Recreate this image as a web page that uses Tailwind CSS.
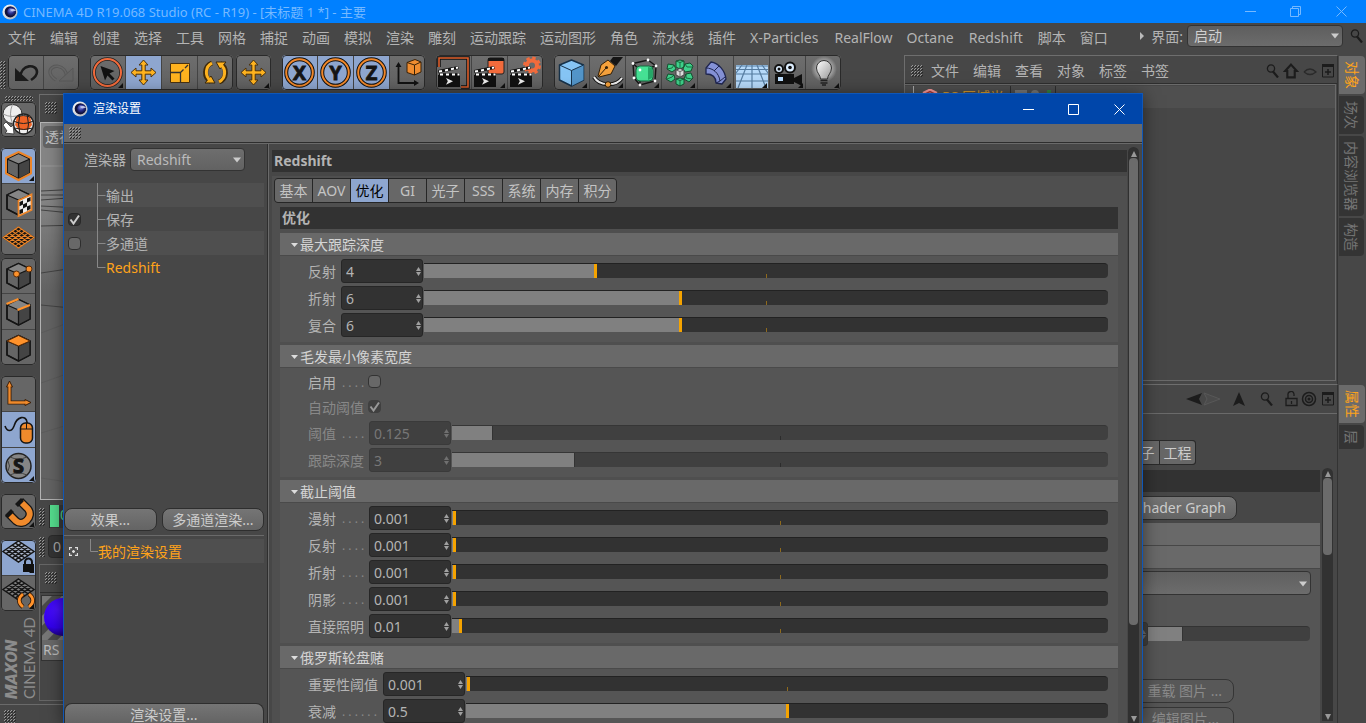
<!DOCTYPE html>
<html lang="zh-CN">
<head>
    <meta charset="UTF-8">
    <meta name="viewport" content="width=device-width, initial-scale=1.0">
    <title>CINEMA 4D R19.068 Studio</title>
    <script src="https://cdn.jsdelivr.net/npm/@tailwindcss/browser@4"></script>
</head>
<body class="relative flex h-screen flex-col overflow-hidden bg-[#474747] font-['Noto_Sans','Noto_Sans_CJK_SC',sans-serif] text-sm leading-5 text-[#b4b4b4]">

    <!-- Shared shapes -->
    <svg width="0" height="0" class="absolute" aria-hidden="true">
        <defs>
            <pattern id="dots" width="3" height="3" patternUnits="userSpaceOnUse">
                <rect x="1" y="0" width="1" height="1" fill="#999"/><rect x="0" y="1" width="1" height="1" fill="#999"/>
                <rect x="2" y="1" width="1" height="1" fill="#262626"/><rect x="1" y="2" width="1" height="1" fill="#262626"/>
            </pattern>
            <radialGradient id="ball" cx=".4" cy=".35" r=".7"><stop offset="0" stop-color="#8a94e0"/><stop offset=".5" stop-color="#2b3190"/><stop offset="1" stop-color="#0a0c30"/></radialGradient>
            <linearGradient id="ring" x1="0" y1="0" x2="1" y2="1"><stop offset="0" stop-color="#fff"/><stop offset="1" stop-color="#a9b0b8"/></linearGradient>
            <radialGradient id="mat" cx=".35" cy=".3" r=".8"><stop offset="0" stop-color="#4a10ff"/><stop offset=".6" stop-color="#3300ee"/><stop offset="1" stop-color="#12004a"/></radialGradient>
            <radialGradient id="glow"><stop offset=".4" stop-color="#fff" stop-opacity=".6"/><stop offset="1" stop-color="#fff" stop-opacity="0"/></radialGradient>
            <linearGradient id="bulb" x1="0" y1="0" x2="1" y2="1"><stop offset="0" stop-color="#fff"/><stop offset="1" stop-color="#999"/></linearGradient>
            <pattern id="stripe" width="14" height="14" patternUnits="userSpaceOnUse" patternTransform="rotate(45)"><rect width="14" height="14" fill="#4a4a4a"/><rect width="7" height="14" fill="#777"/></pattern>
        </defs>
        <symbol id="logo" viewBox="0 0 16 16">
            <circle cx="8" cy="8" r="7.6" fill="url(#ring)"/>
            <circle cx="8.3" cy="7.8" r="5.6" fill="#10123c"/>
            <circle cx="9.6" cy="7.8" r="4.4" fill="url(#ball)"/>
            <path d="M8 5.500c2-1.200 5-.6 6 1.200l-4 .8z" fill="#dfe4ff" opacity=".8"/>
        </symbol>
        <symbol id="corner" viewBox="0 0 5 5"><path d="M5 0v5H0z" fill="#111"/></symbol>
        <symbol id="move" viewBox="0 0 35 35">
            <path d="M17.500 5l4.500 5h-2.800v5.800h5.800V13l5 4.500-5 4.500v-2.800h-5.800V25H22l-4.500 5-4.500-5h2.800v-5.800H10V22l-5-4.500 5-4.500v2.800h5.800V10H13z" fill="#ffb31f" stroke="#4a3210" stroke-width="1"/>
        </symbol>
        <symbol id="axisring" viewBox="0 0 35 35">
            <circle cx="17.500" cy="17.500" r="13.300" fill="none" stroke="#111" stroke-width="4"/>
            <circle cx="17.500" cy="17.500" r="13.300" fill="none" stroke="#f0872a" stroke-width="2"/>
        </symbol>
        <symbol id="cube" viewBox="0 0 35 35">
            <path d="M17.500 5.500L29 11v14l-11.500 6L6 25V11z" fill="#656565" stroke="#151515" stroke-width="1.600" stroke-linejoin="round"/>
            <path d="M6 11l11.500 5L29 11 17.500 5.500z" fill="#858585"/>
            <path d="M17.500 16L29 11v14l-11.500 6z" fill="#444"/>
            <path d="M17.500 5.500L29 11v14l-11.500 6L6 25V11zM6 11l11.500 5L29 11M17.500 16v15" fill="none" stroke="#151515" stroke-width="1.300" stroke-linejoin="round"/>
        </symbol>
        <symbol id="clapper" viewBox="0 0 35 35">
            <path d="M2 20h22v12H2z" fill="#111"/>
            <path d="M2 15l20-4 .8 3L2.500 18z" fill="#111"/><path d="M3 18.200h21v2.600H3z" fill="#111"/>
            <path d="M3 16.600l3-.6M9 15.400l3-.6M15 14.200l3-.6M20 13l2-.4M4 19.500h3M10 19.500h3M16 19.500h3M21.500 19.500h2" stroke="#fff" stroke-width="2"/>
            <path d="M10 23l7 3.300-7 3.400 1.800-3.400z" fill="#eee"/>
        </symbol>
        <symbol id="mesh" viewBox="0 0 35 35">
            <path d="M17.500 3L33 13.500 17.500 24 2 13.500z" fill="currentColor"/>
            <path d="M14.400 5.100l15.500 10.500M11.300 7.200l15.500 10.500M8.200 9.300l15.500 10.500M5.100 11.400l15.500 10.500M20.600 5.100L5.100 15.600M23.700 7.200L8.200 17.700M26.800 9.300L11.300 19.800M29.900 11.400L14.400 21.900M17.500 3L33 13.500 17.500 24 2 13.500z" fill="none" stroke="#151515" stroke-width="1.500"/>
        </symbol>
        <symbol id="lens" viewBox="0 0 14 14"><circle cx="5" cy="4.500" r="3.600" fill="none" stroke="#1c1c1c" stroke-width="1.300"/><path d="M7 7.500l5 6" stroke="#1c1c1c" stroke-width="2.200"/></symbol>
        <symbol id="plus" viewBox="0 0 14 14"><path d="M1.500 1h11v12h-11z" fill="none" stroke="#1c1c1c"/><path d="M1 0h12v3H1z" fill="#1c1c1c"/><path d="M7 5v6M4 8h6" stroke="#1c1c1c" stroke-width="1.500"/></symbol>
    </svg>

    <!-- Title bar -->
    <header class="flex h-[23px] shrink-0 items-center bg-[#0080ff] pr-0.5 pl-0.5 text-[#76b9ff]">
        <svg class="size-4"><use href="#logo"/></svg>
        <h1 class="ml-[5px] flex-1 text-[13px]">CINEMA 4D R19.068 Studio (RC - R19) - [未标题 1 *] - 主要</h1>
        <button aria-label="最小化" class="flex w-[46px] justify-center"><svg width="11" height="11" fill="none" stroke="currentColor"><path d="M0 5.500h11"/></svg></button>
        <button aria-label="还原" class="flex w-[45px] justify-center"><svg width="11" height="11" fill="none" stroke="currentColor"><path d="M.5 2.500h8v8h-8zM2.500 2.500v-2h8v8h-2"/></svg></button>
        <button aria-label="关闭" class="flex w-[46px] justify-center"><svg width="11" height="11" fill="none" stroke="currentColor"><path d="M.5 .5l10 10M10.500 .5l-10 10"/></svg></button>
    </header>

    <!-- Menu bar -->
    <nav class="flex h-8 shrink-0 items-start gap-3.5 pl-2 pt-[5px] whitespace-nowrap">
        <button>文件</button><button>编辑</button><button>创建</button><button>选择</button><button>工具</button><button>网格</button><button>捕捉</button><button>动画</button><button>模拟</button><button>渲染</button><button>雕刻</button><button>运动跟踪</button><button>运动图形</button><button>角色</button><button>流水线</button><button>插件</button><button>X-Particles</button><button class="pl-0.5">RealFlow</button><button>Octane</button><button class="px-px">Redshift</button><button>脚本</button><button>窗口</button>
        <div class="-mt-[3px] ml-auto flex items-center">
            <svg class="mr-1.5 h-2 w-1.5" viewBox="0 0 6 8"><path d="M1 0l4 4-4 4z" fill="#bbb"/></svg>
            <label for="layout" class="pt-0.5">界面:</label>
            <div class="relative ml-1">
                <select id="layout" class="h-[22px] w-[156px] appearance-none rounded border border-[#333] bg-linear-to-b from-[#5e5e5e] to-[#6c6c6c] pl-1.5 leading-5 text-[#d0d0d0]"><option>启动</option></select>
                <svg class="pointer-events-none absolute top-2 right-1 h-1.5 w-2" viewBox="0 0 8 5"><path d="M0 0h8L4 5z" fill="#ccc"/></svg>
            </div>
            <svg class="mr-0.5 ml-[7px] size-3.5"><use href="#lens"/></svg>
        </div>
    </nav>

    <div class="flex min-h-0 flex-1">
        <!-- Left side: tools and viewport -->
        <div class="flex min-w-0 flex-1 flex-col">
            <div class="flex h-[39px] shrink-0 items-start">
                <svg class="mt-1.5 mr-[2px] h-7 w-1.5"><rect width="6" height="28" fill="url(#dots)"/></svg>
                <div class="relative mr-[11px] flex gap-px overflow-hidden rounded bg-[#444] after:pointer-events-none after:absolute after:inset-0 after:rounded after:border after:border-[#2a2a2a]">
                    <button aria-label="撤销" class="size-[35px] bg-linear-to-b from-[#6e6e6e] to-[#606060]"><svg viewBox="0 0 35 35"><path d="M12 23C13 8 29 9 29 17c0 4-3 6-6 8" fill="none" stroke="#1b1b1b" stroke-width="2.600"/><path d="M7 13v13h14z" fill="#1b1b1b"/></svg></button>
                    <button aria-label="重做" class="size-[35px] bg-linear-to-b from-[#6e6e6e] to-[#606060]"><svg viewBox="0 0 35 35"><path d="M23 23C22 8 6 9 6 17c0 4 3 6 6 8" fill="none" stroke="#585858" stroke-width="3.500"/><path d="M23 23C22 8 6 9 6 17c0 4 3 6 6 8" fill="none" stroke="#666" stroke-width="1.600"/><path d="M29 13v13H15z" fill="#646464" stroke="#585858"/></svg></button>
                </div>
                <div class="relative mr-[3px] flex gap-px overflow-hidden rounded bg-[#444] after:pointer-events-none after:absolute after:inset-0 after:rounded after:border after:border-[#2a2a2a]">
                    <button aria-label="选择" class="relative size-[35px] bg-linear-to-b from-[#6e6e6e] to-[#606060]"><svg viewBox="0 0 35 35"><circle cx="17.500" cy="17.500" r="13.500" fill="none" stroke="#222" stroke-width="3.500"/><circle cx="17.500" cy="17.500" r="13.500" fill="none" stroke="#f26b3c" stroke-width="2"/><path d="M10.500 11l14 5-5 2.500 5 5-2 2-5-5-2.500 5z" fill="#111"/></svg><svg class="absolute right-0.5 bottom-0.5 size-[5px]"><use href="#corner"/></svg></button>
                    <button aria-label="移动" class="size-[35px] bg-[#8ea6cf]"><svg viewBox="0 0 35 35"><use href="#move"/></svg></button>
                    <button aria-label="缩放" class="size-[35px] bg-linear-to-b from-[#6e6e6e] to-[#606060]"><svg viewBox="0 0 35 35"><path d="M8.500 8.500h19v19h-19z" fill="#ffb31f" stroke="#4a3210"/><path d="M8.500 17.500h10v10M18.500 17.500l3-3m1.500-1.500l3-3" fill="none" stroke="#333" stroke-width="1.300"/></svg></button>
                    <button aria-label="旋转" class="size-[35px] bg-linear-to-b from-[#6e6e6e] to-[#606060]"><svg viewBox="0 0 35 35"><g fill="none" stroke="#3d2a0c" stroke-width="5"><path d="M13 26.500A10.200 10.200 0 0 1 14 8M22 8.500A10.200 10.200 0 0 1 21 27"/></g><path d="M7 28h10l-4-7zM28 7H18l4 7z" fill="#ffb31f" stroke="#3d2a0c"/><g fill="none" stroke="#ffb31f" stroke-width="3"><path d="M12.500 25.500A10.200 10.200 0 0 1 14 8.200M22.500 9.500A10.200 10.200 0 0 1 21 26.800"/></g></svg></button>
                </div>
                <div class="relative mr-[11px] flex overflow-hidden rounded after:pointer-events-none after:absolute after:inset-0 after:rounded after:border after:border-[#2a2a2a]">
                    <button aria-label="最近工具" class="relative size-[35px] bg-linear-to-b from-[#6e6e6e] to-[#606060]"><svg viewBox="0 0 35 35"><use href="#move"/></svg><svg class="absolute right-0.5 bottom-0.5 size-[5px]"><use href="#corner"/></svg></button>
                </div>
                <div class="relative mr-[11px] flex gap-px overflow-hidden rounded bg-[#444] after:pointer-events-none after:absolute after:inset-0 after:rounded after:border after:border-[#2a2a2a]">
                    <button aria-label="X 轴" class="size-[35px] bg-[#8ea6cf]"><svg viewBox="0 0 35 35" class="text-xl font-bold"><use href="#axisring"/><text x="17.500" y="24.500" text-anchor="middle" fill="#151515" stroke="#151515" stroke-width=".8">X</text></svg></button>
                    <button aria-label="Y 轴" class="size-[35px] bg-[#8ea6cf]"><svg viewBox="0 0 35 35" class="text-xl font-bold"><use href="#axisring"/><text x="17.500" y="24.500" text-anchor="middle" fill="#151515" stroke="#151515" stroke-width=".8">Y</text></svg></button>
                    <button aria-label="Z 轴" class="size-[35px] bg-[#8ea6cf]"><svg viewBox="0 0 35 35" class="text-xl font-bold"><use href="#axisring"/><text x="17.500" y="24.500" text-anchor="middle" fill="#151515" stroke="#151515" stroke-width=".8">Z</text></svg></button>
                    <button aria-label="坐标系统" class="size-[35px] bg-linear-to-b from-[#6e6e6e] to-[#606060]"><svg viewBox="0 0 35 35"><path d="M8.500 11v17H25" fill="none" stroke="#111" stroke-width="1.800"/><path d="M5.500 12h6l-3-5zM24 25v6l5-3z" fill="#111"/><path d="M17 7.500l8-3 6 2.500v10l-6.500 3-7.500-2.500z" fill="#f08d30" stroke="#3a2208"/><path d="M17 7.500l7.500 2.500 6.500-3M24.500 10v10" fill="none" stroke="#3a2208"/></svg></button>
                </div>
                <div class="relative mr-[11px] flex gap-px overflow-hidden rounded bg-[#444] after:pointer-events-none after:absolute after:inset-0 after:rounded after:border after:border-[#2a2a2a]">
                    <button aria-label="渲染活动视图" class="size-[35px] bg-linear-to-b from-[#6e6e6e] to-[#606060]"><svg viewBox="0 0 35 35"><path d="M3 12V3h29v29h-7" fill="none" stroke="#111" stroke-width="3.500"/><path d="M3 12V3h29v29h-7" fill="none" stroke="#e0602c" stroke-width="1.600"/><use href="#clapper"/></svg></button>
                    <button aria-label="渲染到图片查看器" class="relative size-[35px] bg-linear-to-b from-[#6e6e6e] to-[#606060]"><svg viewBox="0 0 35 35"><rect x="16" y="3" width="16" height="16" rx="2" fill="#f26b3c" stroke="#222"/><path d="M16 3h16v3H16z" fill="#151515"/><use href="#clapper"/></svg><svg class="absolute right-0.5 bottom-0.5 size-[5px]"><use href="#corner"/></svg></button>
                    <button aria-label="编辑渲染设置" class="size-[35px] bg-linear-to-b from-[#6e6e6e] to-[#606060]"><svg viewBox="0 0 35 35"><circle cx="24" cy="10.500" r="5" fill="none" stroke="#f26b3c" stroke-width="4"/><circle cx="24" cy="10.500" r="7.600" fill="none" stroke="#f26b3c" stroke-width="2.800" stroke-dasharray="3.400 2.570"/><use href="#clapper"/></svg></button>
                </div>
                <div class="relative flex gap-px overflow-hidden rounded bg-[#444] after:pointer-events-none after:absolute after:inset-0 after:rounded after:border after:border-[#2a2a2a]">
                    <button aria-label="立方体" class="relative size-[35px] bg-linear-to-b from-[#6e6e6e] to-[#606060]"><svg viewBox="0 0 35 35"><path d="M17.500 5l12 5v15l-12 6-12-6V10z" fill="#86c5f5" stroke="#17324a" stroke-width="1.500" stroke-linejoin="round"/><path d="M17.500 15.500l12-5.500v15l-12 6z" fill="#5395c9"/><path d="M5.500 10l12 5.500 12-5.500M17.500 15.500V31" fill="none" stroke="#17324a"/></svg><svg class="absolute right-0.5 bottom-0.5 size-[5px]"><use href="#corner"/></svg></button>
                    <button aria-label="画笔" class="relative size-[35px] bg-linear-to-b from-[#6e6e6e] to-[#606060]"><svg viewBox="0 0 35 35"><path d="M23 2h10l-7 9-6-5z" fill="#151515"/><path d="M18 5l7 6-4 8-12 3-1-1 3-11z" fill="#f5a13c" stroke="#332008"/><path d="M9 21l7-8" stroke="#332008"/><circle cx="16.500" cy="12.500" r="1.500" fill="#332008"/><path d="M4 22c5 9 22 10 28 1" fill="none" stroke="#151515" stroke-width="4"/><path d="M4 22c5 9 22 10 28 1" fill="none" stroke="#eee" stroke-width="2"/><circle cx="18" cy="29.500" r="2.800" fill="#f5a13c" stroke="#332008"/></svg><svg class="absolute right-0.5 bottom-0.5 size-[5px]"><use href="#corner"/></svg></button>
                    <button aria-label="细分曲面" class="relative size-[35px] bg-linear-to-b from-[#6e6e6e] to-[#606060]"><svg viewBox="0 0 35 35"><path d="M7 8.500L22 5l8 6-1 15-15 4-6-7zM7 8.500l7 6.500 16-4M14 15v15" fill="none" stroke="#151515" stroke-width="1.400"/><rect x="10" y="11" width="17" height="15" rx="4" fill="#46e295" stroke="#16683f"/><path d="M22 12l4 1v10l-4 2z" fill="#25a868"/><g fill="#fff"><circle cx="7" cy="8.500" r="1.400"/><circle cx="22" cy="5" r="1.400"/><circle cx="30" cy="11" r="1.400"/><circle cx="29" cy="26" r="1.400"/><circle cx="14" cy="30" r="1.400"/><circle cx="8" cy="23" r="1.400"/><circle cx="14" cy="15" r="1.400"/></g></svg><svg class="absolute right-0.5 bottom-0.5 size-[5px]"><use href="#corner"/></svg></button>
                    <button aria-label="阵列" class="relative size-[35px] bg-linear-to-b from-[#6e6e6e] to-[#606060]"><svg viewBox="0 0 35 35"><g fill="#3ed08a" stroke="#14502f"><path d="M14 6l4-1 4 1v6l-4 2-4-2zM23 9l5-1 3 3-2 5-6 1-2-3zM24 19l5-1 2 5-4 4-5-3zM14 24l4-1 4 1v5l-4 2-4-2zM6 19l6 1 1 4-4 3-5-3zM6 9l6 1 2 4-4 3-5-3z"/></g><path d="M14 6l4 1.500 4-1.500M18 7.500V14M14 24l4 1.500 4-1.500M18 25.500V31M5 14l5-1 2-3M5 24l5-2 2-2M23 9l2 3 5 0M24 19l0 4 6 1" fill="none" stroke="#14502f" stroke-width=".8"/><path d="M14 15l4-1.500 4 1.500v5l-4 2-4-2z" fill="#ddd" stroke="#444"/><path d="M14 15l4 1.500 4-1.500M18 16.500V22" fill="none" stroke="#666"/></svg><svg class="absolute right-0.5 bottom-0.5 size-[5px]"><use href="#corner"/></svg></button>
                    <button aria-label="弯曲" class="relative size-[35px] bg-linear-to-b from-[#6e6e6e] to-[#606060]"><svg viewBox="0 0 35 35"><path d="M8 13l5-6c8 1 14 9 15 17l-4 5-6-1c0-6-4-9-10-9z" fill="#8491d6" stroke="#20264f" stroke-width="1.300" stroke-linejoin="round"/><path d="M8 13c7 0 13 5 14 13l-4 2M22 26l5-4M16 16l5-5" fill="none" stroke="#20264f"/></svg><svg class="absolute right-0.5 bottom-0.5 size-[5px]"><use href="#corner"/></svg></button>
                    <button aria-label="地面" class="relative size-[35px] bg-linear-to-b from-[#6e6e6e] to-[#606060]"><svg viewBox="0 0 35 35"><path d="M2 10h32v23H2z" fill="#b7dafa"/><path d="M2 11h32M2 14.500h32M2 19h32M2 26h32M18 10v23M13 10L4 33M23 10l9 23M8 10l-6 8M28 10l6 8" fill="none" stroke="#567ca0" stroke-width="1.200"/></svg><svg class="absolute right-0.5 bottom-0.5 size-[5px]"><use href="#corner"/></svg></button>
                    <button aria-label="摄像机" class="relative size-[35px] bg-linear-to-b from-[#6e6e6e] to-[#606060]"><svg viewBox="0 0 35 35"><path d="M5 19h19v4l8-4v12l-8-4v2H5z" fill="#111"/><circle cx="9" cy="14" r="4" fill="#ddeeff" stroke="#111" stroke-width="2"/><circle cx="20" cy="12.500" r="5" fill="#ddeeff" stroke="#111" stroke-width="2"/><circle cx="9" cy="14" r="1.500" fill="#111"/><circle cx="20" cy="12.500" r="1.800" fill="#111"/><path d="M8 22h5v4H8z" fill="#bfe0ff"/></svg><svg class="absolute right-0.5 bottom-0.5 size-[5px]"><use href="#corner"/></svg></button>
                    <button aria-label="灯光" class="relative size-[35px] bg-linear-to-b from-[#6e6e6e] to-[#606060]"><svg viewBox="0 0 35 35"><circle cx="18" cy="14" r="13" fill="url(#glow)"/><path d="M14.500 24c0-4-4-6-4-11a7.500 7.500 0 0 1 15 0c0 5-4 7-4 11z" fill="url(#bulb)" stroke="#333"/><path d="M14.500 25.500h7M14.500 28h7M16 30h4" stroke="#222" stroke-width="1.600"/></svg><svg class="absolute right-0.5 bottom-0.5 size-[5px]"><use href="#corner"/></svg></button>
                </div>
            </div>

            <div class="flex min-h-0 flex-1">
                <!-- Mode palette -->
                <div class="flex w-[39px] shrink-0 flex-col items-start pl-px">
                    <svg class="mt-[2px] mb-px ml-1 h-[5px] w-7 shrink-0"><rect width="28" height="5" fill="url(#dots)"/></svg>
                    <div class="relative mb-[11px] flex shrink-0 flex-col overflow-hidden rounded after:pointer-events-none after:absolute after:inset-0 after:rounded after:border after:border-[#2a2a2a]">
                        <button aria-label="转为可编辑对象" class="size-[35px] bg-[#686868]"><svg viewBox="0 0 35 35"><circle cx="11.500" cy="12" r="9.500" fill="#eee" stroke="#333"/><path d="M2 12q9.500 5 19 0M11.500 2.500q-4 9 0 19" fill="none" stroke="#999"/><circle cx="22.500" cy="22" r="10" fill="#eee" stroke="#222" stroke-width="1.400"/><path d="M16 14h13l2 9-4 5h-9l-4-5z" fill="#ee6326"/><path d="M12.500 19q10 5 20 0M13 26q10 3 19 0M19 12q-3 10 0 20M26 12q3 10 0 20M14 16q8-5 17 0" fill="none" stroke="#222"/><path d="M2 23l3-3 5 5 2-2 1 9-9-1 2-2z" fill="#fff" stroke="#333" stroke-width=".8"/></svg></button>
                    </div>
                    <div class="relative mb-[3px] flex shrink-0 flex-col gap-px overflow-hidden rounded bg-[#444] after:pointer-events-none after:absolute after:inset-0 after:rounded after:border after:border-[#2a2a2a]">
                        <button aria-label="模型" class="relative size-[35px] bg-[#8ea6cf]"><svg viewBox="0 0 35 35"><use href="#cube"/><path d="M17.500 4L30 10v15.500l-12.500 6.500L5 25.500V10z" fill="none" stroke="#ed8528" stroke-width="2"/></svg><svg class="absolute right-0.5 bottom-0.5 size-[5px]"><use href="#corner"/></svg></button>
                        <button aria-label="纹理" class="size-[35px] bg-[#666]"><svg viewBox="0 0 35 35"><use href="#cube"/><path d="M17.500 16.500l13-6v15.500l-13 6z" fill="#eee" stroke="#ed8528" stroke-width="1.800"/><path d="M18.500 18l3.500-1.600v4.200l-3.500 1.600zM26 14.500l3.500-1.500v4L26 18.600zM22 20.600l4-2v4l-4 2zM18.500 26l3.500-1.500v4.200l-3.500 1.600zM26 22.600l3.500-1.600v4L26 26.700z" fill="#111"/></svg></button>
                        <button aria-label="工作平面" class="size-[35px] bg-[#666] text-[#ed8528]"><svg viewBox="0 0 35 35"><g transform="translate(0 4)"><path d="M17.500 2.500L34 13.500 17.500 24.500 1 13.500z" fill="#151515"/><path d="M14.400 5.100l15.500 10.500M11.300 7.200l15.500 10.500M8.200 9.300l15.500 10.500M5.100 11.400l15.500 10.500M20.600 5.100L5.100 15.600M23.700 7.200L8.200 17.700M26.800 9.300L11.300 19.800M29.900 11.400L14.400 21.900M17.500 3L33 13.500 17.500 24 2 13.500z" fill="none" stroke="currentColor" stroke-width="1.100"/></g></svg></button>
                    </div>
                    <div class="relative mb-[11px] flex shrink-0 flex-col gap-px overflow-hidden rounded bg-[#444] after:pointer-events-none after:absolute after:inset-0 after:rounded after:border after:border-[#2a2a2a]">
                        <button aria-label="点" class="size-[35px] bg-[#666]"><svg viewBox="0 0 35 35"><use href="#cube"/><g fill="#ff922b" stroke="#5a2c08"><circle cx="15.500" cy="16" r="3"/><circle cx="28" cy="11" r="3"/></g></svg></button>
                        <button aria-label="边" class="size-[35px] bg-[#666]"><svg viewBox="0 0 35 35"><use href="#cube"/><path d="M5.500 10l12-5M16.500 16l12.500-5" stroke="#ff922b" stroke-width="2.200"/></svg></button>
                        <button aria-label="多边形" class="size-[35px] bg-[#666]"><svg viewBox="0 0 35 35"><use href="#cube"/><path d="M6 11l11.500-5.500L29 11l-11.500 5z" fill="#ff922b" stroke="#5a2c08"/></svg></button>
                    </div>
                    <div class="relative mb-[11px] flex shrink-0 flex-col gap-px overflow-hidden rounded bg-[#444] after:pointer-events-none after:absolute after:inset-0 after:rounded after:border after:border-[#2a2a2a]">
                        <button aria-label="启用轴心" class="size-[35px] bg-[#666]"><svg viewBox="0 0 35 35"><path d="M8.500 10v16.500H25" fill="none" stroke="#3a1c05" stroke-width="4"/><path d="M5.500 11l3-6 3 6zM24 23.500l6 3-6 3z" fill="#f08a2c" stroke="#3a1c05"/><path d="M8.500 9v17.500H26" fill="none" stroke="#f08a2c" stroke-width="2.300"/></svg></button>
                        <button aria-label="微调" class="size-[35px] bg-[#8ea6cf]"><svg viewBox="0 0 35 35"><path d="M4 14c2 6 7 6 9 0 3-10 12-11 13-4v2" fill="none" stroke="#151515" stroke-width="1.600"/><rect x="19.500" y="11" width="12" height="20" rx="5" fill="#f08a2c" stroke="#151515" stroke-width="1.500"/><path d="M19.500 17h12M25.500 11v6" stroke="#151515"/></svg></button>
                        <button aria-label="捕捉" class="relative size-[35px] bg-[#8ea6cf]"><svg viewBox="0 0 35 35" class="text-xl font-bold"><circle cx="17.500" cy="18" r="12.500" fill="#858585" stroke="#222" stroke-width="1.500"/><path d="M9 9q8 4 17 0M9 27q8-4 17 0M7 13q3 5 0 10" fill="none" stroke="#444"/><text x="17.500" y="25" text-anchor="middle" fill="#151515" stroke="#151515">S</text></svg><svg class="absolute right-0.5 bottom-0.5 size-[5px]"><use href="#corner"/></svg></button>
                    </div>
                    <div class="relative mb-[11px] flex shrink-0 flex-col overflow-hidden rounded after:pointer-events-none after:absolute after:inset-0 after:rounded after:border after:border-[#2a2a2a]">
                        <button aria-label="磁铁" class="relative size-[35px] bg-[#666]"><svg viewBox="0 0 35 35"><path d="M7 19l8 8c7 6 18-4 12-12l-8-8" fill="none" stroke="#151515" stroke-width="8.500"/><path d="M8 20l7 7c7 6 18-4 12-12l-7-7" fill="none" stroke="#f08a2c" stroke-width="6"/><path d="M4 21l6-6 3 3-6 6zM14 10l6-6 3 3-6 6z" fill="#151515"/></svg><svg class="absolute right-0.5 bottom-0.5 size-[5px]"><use href="#corner"/></svg></button>
                    </div>
                    <div class="relative flex shrink-0 flex-col gap-px overflow-hidden rounded bg-[#444] after:pointer-events-none after:absolute after:inset-0 after:rounded after:border after:border-[#2a2a2a]">
                        <button aria-label="锁定工作平面" class="relative size-[35px] bg-[#8ea6cf]"><svg viewBox="0 0 35 35" class="text-[#a9b4c8]"><g transform="translate(0 -2)"><use href="#mesh"/></g><path d="M24 25v-3a3.500 3.500 0 0 1 7 0v3" fill="none" stroke="#111" stroke-width="2"/><path d="M22 24h11v8H22z" fill="#111"/></svg><svg class="absolute right-0.5 bottom-0.5 size-[5px]"><use href="#corner"/></svg></button>
                        <button aria-label="平直工作平面" class="relative size-[35px] bg-[#666]"><svg viewBox="0 0 35 35" class="text-[#808080]"><use href="#mesh"/><path d="M22 18c-5 4-5 9 0 13M28 18c5 4 5 9 0 13" fill="none" stroke="#3a1c05" stroke-width="4.500"/><path d="M22 18c-5 4-5 9 0 13M28 18c5 4 5 9 0 13" fill="none" stroke="#ff922b" stroke-width="2.800"/></svg><svg class="absolute right-0.5 bottom-0.5 size-[5px]"><use href="#corner"/></svg></button>
                    </div>
                    <div class="mt-1 flex h-[84px] shrink-0 rotate-180 flex-row-reverse whitespace-nowrap text-[#8c8c8c]">
                        <span class="font-[Roboto] text-[17px] leading-5 font-black italic [writing-mode:vertical-rl]">MAXON</span>
                        <span class="font-[Lato] text-[15px] leading-4 [writing-mode:vertical-rl]">CINEMA 4D</span>
                    </div>
                    <div class="mt-[5px] -ml-px w-[63px] border-t border-[#6a6a6a] pt-[5px] pl-1"><svg class="h-[15px] w-3"><rect width="12" height="15" fill="url(#dots)"/></svg></div>
                </div>

                <!-- Viewport, timeline and materials -->
                <div class="flex min-w-0 flex-1 flex-col">
                    <div class="h-7 shrink-0 border-t border-l border-[#6e6e6e] pt-[7px] pl-[5px]"><svg class="size-3"><rect width="12" height="12" fill="url(#dots)"/></svg></div>
                    <div class="relative ml-px h-[378px] shrink-0 border border-[#b4b4b4] bg-linear-to-b from-[#858585] from-20% to-[#636363] to-45%">
                        <svg class="absolute inset-0 h-full w-full" fill="none" stroke="#444"><path d="M0 43h900" stroke="#999"/><path d="M0 68l40-2M0 72h40M0 77l40-3M0 83l40 2M0 87l40 4M0 103l40-1M0 150l40-6M0 182l40 4"/><path d="M0 210l40-15M0 260l40-14M0 310l40-12M0 355l40 6" stroke="#5c5c5c"/></svg>
                        <span class="relative mt-[3px] ml-[2px] inline-block h-[22px] w-20 rounded-sm bg-[#636363] pl-[2px] leading-[22px] text-[#c8c8c8]">透视视图</span>
                    </div>
                    <div class="mt-[5px] flex h-[23px] shrink-0 items-center gap-[4px]">
                        <svg class="h-[18px] w-1.5"><rect width="6" height="18" fill="url(#dots)"/></svg>
                        <div class="flex h-full flex-1 items-start border-l border-[#2b2b2b] bg-[#3a3a3a] text-[#4fd98a]"><span class="mr-px h-[22px] w-[9px] bg-[#55dd8e]"></span>0</div>
                    </div>
                    <div class="mt-[7px] flex h-[23px] shrink-0 items-center gap-[3px]">
                        <svg class="h-5 w-1.5"><rect width="6" height="20" fill="url(#dots)"/></svg>
                        <input aria-label="起始帧" value="0" class="h-full w-20 rounded border border-[#2b2b2b] bg-[#343434] pl-[4px] text-[#aaa]">
                    </div>
                    <div class="mt-[6px] h-[137px] shrink-0 border border-[#666]">
                        <div class="h-7 border-b border-[#2f2f2f] pt-[7px] pl-[5px]"><svg class="size-3"><rect width="12" height="12" fill="url(#dots)"/></svg></div>
                        <figure class="mt-0.5 ml-px w-[60px] border border-[#333] bg-[#696969]">
                            <svg class="h-11 w-full"><rect width="60" height="44" fill="url(#stripe)"/><circle cx="21" cy="21" r="19" fill="url(#mat)"/></svg>
                            <figcaption class="pl-px text-[#bbb]">RS Mat</figcaption>
                        </figure>
                    </div>
                </div>
            </div>
        </div>

        <!-- Right side: managers -->
        <div class="flex w-[462px] shrink-0 flex-col">
            <div class="flex h-[329px] shrink-0">
                <section class="flex w-[434px] flex-col border-t border-r border-l border-t-[#6e6e6e] border-r-[#333] border-l-[#6e6e6e] pr-px pb-[3px]">
                    <div class="-mr-px flex h-7 shrink-0 items-center gap-3.5 border-b border-[#2e2e2e] pt-0.5 pl-1.5">
                        <svg class="-mr-[6px] size-3"><rect width="12" height="12" fill="url(#dots)"/></svg>
                        <button>文件</button><button>编辑</button><button>查看</button><button>对象</button><button>标签</button><button>书签</button>
                        <div class="mr-[2px] ml-auto flex items-center gap-[3px]">
                            <svg class="size-3.5"><use href="#lens"/></svg>
                            <svg class="size-4" viewBox="0 0 15 15"><path d="M7.500 1.500l5.500 6h-2v6H4v-6H2z" fill="none" stroke="#1c1c1c" stroke-width="2"/></svg>
                            <svg class="h-3.5 w-4" viewBox="0 0 16 14"><path d="M2 8q6-6 12 0q-6 5-12 0" fill="none" stroke="#2a2a2a" stroke-width="1.300"/></svg>
                            <svg class="size-3.5"><use href="#plus"/></svg>
                        </div>
                    </div>
                    <div class="flex-1 border-t border-r border-b border-[#6a6a6a]">
                        <div class="mt-px flex h-[22px] items-center bg-[#4f4f4f]">
                            <span class="ml-2 h-full w-px bg-[#aaa]"></span>
                            <svg class="ml-2 size-4" viewBox="0 0 16 16"><path d="M8 0l7 4v8l-7 4-7-4V4z" fill="#a83a3a"/><path d="M1 4l7-3.500L15 4" fill="none" stroke="#ff9c9c" stroke-width="2"/><circle cx="8" cy="7" r="3" fill="none" stroke="#f6a0a0"/></svg>
                            <span class="ml-1 text-[#d69a2c]">RS 区域光</span>
                            <span class="ml-1.5 flex h-full items-start gap-1 border-x border-[#2e2e2e] px-1 pt-1"><i class="h-2.5 w-3 bg-[#777]"></i><i class="size-2 rounded-full bg-[#777]"></i><i class="ml-1 size-1 bg-[#358040]"></i></span>
                        </div>
                    </div>
                </section>
                <div class="flex flex-1 flex-col items-start gap-[2px] pt-px pl-px text-sm">
                    <button class="w-[26px] rounded-r bg-[#6b6b6b] pt-[5px] pb-[5px] leading-[26px] text-[#ffa31a] [text-orientation:sideways] [writing-mode:vertical-rl]">对象</button>
                    <button class="w-[25px] rounded-r bg-[#343434] pt-[5px] pb-[5px] leading-[25px] text-[#747474] [text-orientation:sideways] [writing-mode:vertical-rl]">场次</button>
                    <button class="w-[25px] rounded-r bg-[#343434] pt-[5px] pb-[5px] leading-[25px] text-[#747474] [text-orientation:sideways] [writing-mode:vertical-rl]">内容浏览器</button>
                    <button class="w-[25px] rounded-r bg-[#343434] pt-[5px] pb-[5px] leading-[25px] text-[#747474] [text-orientation:sideways] [writing-mode:vertical-rl]">构造</button>
                </div>
            </div>
            <div class="flex min-h-0 flex-1">
                <section class="flex w-[434px] flex-col border-t border-r border-t-[#6e6e6e] border-r-[#333]">
                    <div class="flex h-[29px] shrink-0 items-center justify-end border-b border-[#6a6a6a] pr-[2px]">
                        <svg class="mr-2.5 h-4 w-9" viewBox="0 0 36 16"><path d="M0 8l16-6-3 6 3 6z" fill="#1c1c1c"/><path d="M34 8L18 2l3 6-3 6z" fill="#4b4b4b" stroke="#585858"/></svg>
                        <svg class="mr-3.5 h-4 w-3.5" viewBox="0 0 14 16"><path d="M7 1l6 14-6-3-6 3z" fill="#1c1c1c"/></svg>
                        <svg class="mr-[9px] size-3.5"><use href="#lens"/></svg>
                        <svg class="mr-0.5 size-4" viewBox="0 0 16 16" fill="none" stroke="#1c1c1c" stroke-width="1.300"><path d="M3 7.500h11v7H3zM5 7V4a3 3 0 0 1 6-1v2M8.500 10v3"/></svg>
                        <svg class="mr-1 size-4" viewBox="0 0 16 16" fill="none" stroke="#1c1c1c" stroke-width="1.500"><circle cx="8" cy="8" r="6.500"/><circle cx="8" cy="8" r="3.500"/><circle cx="8" cy="8" r=".8"/></svg>
                        <svg class="size-3.5"><use href="#plus"/></svg>
                    </div>
                    <div class="flex min-h-0 flex-1">
                        <div class="flex min-w-0 flex-1 flex-col items-end">
                            <div class="mt-[26px] mr-[124px] flex shrink-0 gap-px rounded-[3px] border border-[#2a2a2a] bg-[#2a2a2a] text-[#ccc]">
                                <button class="h-[23px] w-[37px] bg-[#676767]">光子</button><button class="h-[23px] w-[35px] rounded-r-[3px] bg-[#676767]">工程</button>
                            </div>
                            <div class="mt-[5px] h-[22px] w-full shrink-0 bg-[#323232]"></div>
                            <button class="mt-1 mr-[83px] h-[24px] shrink-0 rounded-lg border border-[#2e2e2e] bg-linear-to-b from-[#757575] to-[#646464] px-2.5 leading-[22px] text-[#ccc]">Shader Graph</button>
                            <div class="mt-[3px] h-[22px] w-full shrink-0 bg-[#696969]"></div>
                            <div class="mt-px h-[22px] w-full shrink-0 bg-[#696969]"></div>
                            <div class="mt-px flex w-full flex-1 flex-col items-end bg-[#555] pt-[2px]">
                                <div class="relative mr-[9px]">
                                    <select aria-label="纹理" class="block h-6 w-72 appearance-none rounded border border-[#333] bg-linear-to-b from-[#606060] to-[#6c6c6c]"><option></option></select>
                                    <svg class="pointer-events-none absolute top-2.5 right-1 h-1.5 w-2" viewBox="0 0 8 5"><path d="M0 0h8L4 5z" fill="#ccc"/></svg>
                                </div>
                                <div class="mt-[27px] mr-[10px] flex">
                                    <div class="relative">
                                        <input type="text" aria-label="偏移值" disabled class="block h-6 w-20 rounded-[3px] border border-[#3a3a3a] bg-[#404040]">
                                        <svg class="pointer-events-none absolute top-2 right-0.5 h-[9px] w-[5px]" viewBox="0 0 5 9"><path d="M2.500 0L5 4H0zM2.500 9L5 5H0z" fill="#707070"/></svg>
                                    </div>
                                    <input type="range" aria-label="偏移" disabled min="0" max="1" step="any" value="0.21" class="mt-1 h-[15px] w-[162px] appearance-none rounded-r border-t border-[#333] [&::-webkit-slider-thumb]:h-3.5 [&::-webkit-slider-thumb]:w-px [&::-webkit-slider-thumb]:appearance-none [&::-webkit-slider-thumb]:bg-[#333]" style="background:linear-gradient(to right,#808080 21%,#404040 21%)">
                                </div>
                                <button disabled class="mt-[33px] mr-[86px] h-6 shrink-0 rounded-lg border border-[#353535] bg-[#585858] px-[11px] leading-[22px] text-[#8a8a8a]">重载 图片 ...</button>
                                <button disabled class="mt-1 mr-[86px] h-6 shrink-0 rounded-lg border border-[#353535] bg-[#585858] px-[14px] leading-5 text-[#8a8a8a]">编辑图片...</button>
                            </div>
                        </div>
                        <div class="mt-[54px] mr-1 mb-0.5 ml-[2px] flex w-[11px] flex-col items-center justify-between rounded-t-lg bg-[#323232]">
                            <svg class="mt-[3px] mb-px h-1.5 w-1.5 shrink-0" viewBox="0 0 6 6"><path d="M3 0l3 6H0z" fill="#999"/></svg>
                            <div class="h-[77px] w-[9px] shrink-0 rounded bg-[#6b6b6b]"></div>
                            <svg class="mt-auto mb-px h-1.5 w-1.5 shrink-0" viewBox="0 0 6 6"><path d="M3 6l3-6H0z" fill="#999"/></svg>
                        </div>
                    </div>
                </section>
                <div class="flex flex-1 flex-col items-start gap-[2px] pt-px pl-px text-sm">
                    <button class="w-[26px] rounded-r bg-[#6b6b6b] pt-[5px] pb-[5px] leading-[26px] text-[#ffa31a] [text-orientation:sideways] [writing-mode:vertical-rl]">属性</button>
                    <button class="w-[25px] rounded-r bg-[#343434] pt-[5px] pb-[5px] leading-[25px] text-[#747474] [text-orientation:sideways] [writing-mode:vertical-rl]">层</button>
                </div>
            </div>
        </div>
    </div>

    <!-- Render settings window -->
    <div role="dialog" aria-labelledby="dlgTitle" class="absolute top-[93px] right-[223px] bottom-0 left-[63px] flex flex-col border-x border-[#0f57b8] bg-[#474747] shadow-[0_2px_16px_rgba(0,0,0,0.5)]">
        <div class="flex h-[31px] shrink-0 items-center border-t border-[#0f57b8] bg-[#0046aa] pl-2 text-xs text-white">
            <svg class="size-4"><use href="#logo"/></svg>
            <h2 id="dlgTitle" class="ml-[5px] flex-1">渲染设置</h2>
            <button aria-label="最小化" class="flex w-[46px] justify-center"><svg width="11" height="11" fill="none" stroke="currentColor"><path d="M0 5.500h11"/></svg></button>
            <button aria-label="最大化" class="flex w-[45px] justify-center"><svg width="11" height="11" fill="none" stroke="currentColor"><path d="M.5 .5h10v10H.5z"/></svg></button>
            <button aria-label="关闭" class="flex w-[46px] justify-center"><svg width="11" height="11" fill="none" stroke="currentColor"><path d="M.5 .5l10 10M10.500 .5l-10 10"/></svg></button>
        </div>
        <div class="h-[19px] shrink-0 border-b border-[#2e2e2e] bg-[#696969] pt-[3px] pl-[5px]"><svg class="size-3"><rect width="12" height="12" fill="url(#dots)"/></svg></div>

        <div class="flex min-h-0 flex-1 border-t border-[#6a6a6a]">
            <aside class="flex w-[204px] shrink-0 flex-col border-r border-[#2e2e2e] pr-[3px]">
                <div class="mt-1 flex shrink-0 items-center pl-5">
                    <label for="renderer">渲染器</label>
                    <div class="relative ml-1">
                        <select id="renderer" class="block h-[23px] w-[115px] appearance-none rounded border border-[#333] bg-linear-to-b from-[#6e6e6e] to-[#626262] pl-1.5 leading-5 text-[#bbb]"><option>Redshift</option></select>
                        <svg class="pointer-events-none absolute top-[9px] right-1 h-1.5 w-2" viewBox="0 0 8 5"><path d="M0 0h8L4 5z" fill="#ccc"/></svg>
                    </div>
                </div>
                <ul class="mt-3">
                    <li class="flex h-6 items-center bg-[#4f4f4f] pl-[33px]"><svg class="h-6 w-[9px]" fill="none" stroke="#888"><path d="M.5 0v24M.5 12.500h8"/></svg><span class="pt-0.5">输出</span></li>
                    <li class="flex h-6 items-center pl-[4px]">
                        <span class="relative mr-4 size-[13px]"><input id="save" type="checkbox" checked class="block size-[13px] appearance-none rounded-[4px] border border-[#282828] bg-[#333]"><svg class="pointer-events-none absolute inset-0 size-[13px]" fill="none" stroke="#ccc" stroke-width="2"><path d="M2.500 6.500l3 4 5.500-8"/></svg></span>
                        <svg class="h-6 w-[9px]" fill="none" stroke="#888"><path d="M.5 0v24M.5 12.500h8"/></svg><label for="save" class="pt-0.5">保存</label>
                    </li>
                    <li class="flex h-6 items-center bg-[#4f4f4f] pl-[4px]">
                        <input id="multi" type="checkbox" class="mr-4 size-[13px] appearance-none rounded-[4px] border border-[#2e2e2e] bg-[#686868]">
                        <svg class="h-6 w-[9px]" fill="none" stroke="#888"><path d="M.5 0v24M.5 12.500h8"/></svg><label for="multi" class="pt-0.5">多通道</label>
                    </li>
                    <li class="flex h-6 items-center pl-[33px] text-[#ffa31a]"><svg class="h-6 w-[9px]" fill="none" stroke="#888"><path d="M.5 0v12.500h8"/></svg><span class="pt-0.5">Redshift</span></li>
                </ul>
                <div class="mt-[229px] flex shrink-0 gap-[5px] text-[#ccc]">
                    <button class="h-[23px] w-[93px] rounded-lg border border-[#2e2e2e] bg-linear-to-b from-[#757575] to-[#646464]">效果...</button>
                    <button class="h-[23px] flex-1 rounded-lg border border-[#2e2e2e] bg-linear-to-b from-[#757575] to-[#646464]">多通道渲染...</button>
                </div>
                <div class="mt-1 h-px shrink-0 bg-[#6a6a6a]"></div>
                <div class="mt-[3px] flex h-6 shrink-0 items-center bg-[#4f4f4f] pl-[5px] text-[#ffa31a]">
                    <svg class="size-[9px]" fill="none" stroke="#ddd" stroke-width="1.300"><path d="M.5 3V.5H3M6 .5h2.500V3M8.500 6v2.500H6M3 8.500H.5V6M3 4.500h3M4.500 3v3"/></svg>
                    <svg class="ml-3 h-6 w-[8px]" fill="none" stroke="#888"><path d="M.5 0v12.500h8"/></svg><span class="pt-0.5">我的渲染设置</span>
                </div>
                <button class="mt-auto h-[20px] shrink-0 rounded-t-lg border border-b-0 border-[#2e2e2e] bg-linear-to-b from-[#757575] to-[#646464] pt-0.5 leading-[18px] text-[#ccc]">渲染设置...</button>
            </aside>

            <main class="flex min-w-0 flex-1 flex-col border-l border-[#6a6a6a] pt-[6px] pl-[3px]">
                <h3 class="h-[22px] shrink-0 bg-[#323232] pl-[2px] leading-[22px] font-bold">Redshift</h3>
                <div class="mt-1 flex min-h-0 flex-1 flex-col overflow-hidden bg-[#4f4f4f] pt-0.5 pr-[9px] pl-[2px]">
                    <div class="flex shrink-0 gap-px self-start overflow-hidden rounded border border-[#262626] bg-[#262626] text-[#c4c4c4]">
                        <button class="h-[23px] w-[37px] bg-[#676767]">基本</button>
                        <button class="h-[23px] w-[37px] bg-[#676767]">AOV</button>
                        <button class="h-[23px] w-[37px] bg-[#8ea6cf] text-black">优化</button>
                        <button class="h-[23px] w-[37px] bg-[#676767]">GI</button>
                        <button class="h-[23px] w-[37px] bg-[#676767]">光子</button>
                        <button class="h-[23px] w-[37px] bg-[#676767]">SSS</button>
                        <button class="h-[23px] w-[37px] bg-[#676767]">系统</button>
                        <button class="h-[23px] w-[37px] bg-[#676767]">内存</button>
                        <button class="h-[23px] w-[37px] bg-[#676767]">积分</button>
                    </div>
                    <h4 class="mt-1 ml-1.5 h-[22px] shrink-0 bg-[#323232] pl-0.5 leading-[22px] font-bold">优化</h4>
                    <div id="groups" class="mt-1 ml-1.5 flex flex-col gap-[3px]"></div>
                </div>
            </main>
            <div class="mt-[3px] mr-[3px] ml-px flex w-[11px] shrink-0 flex-col items-center rounded-t-lg bg-[#303030]">
                <svg class="mt-1 mb-px h-1.5 w-1.5 shrink-0" viewBox="0 0 6 6"><path d="M3 0l3 6H0z" fill="#999"/></svg>
                <div class="h-[467px] w-[9px] shrink-0 rounded bg-[#6b6b6b]"></div>
                <svg class="mt-auto mb-px h-1.5 w-1.5 shrink-0" viewBox="0 0 6 6"><path d="M3 6l3-6H0z" fill="#999"/></svg>
            </div>
        </div>
    </div>

    <script>
        // [label, dots, value, slider position]
        const groups = [
            { title: '最大跟踪深度', labelWidth: 'w-[33px]', rows: [['反射', '', '4', 0.25], ['折射', '', '6', 0.375], ['复合', '', '6', 0.375]] },
            { title: '毛发最小像素宽度', labelWidth: 'w-[61px]', disabled: true,
              checks: [['启用', '. . . .', false, false], ['自动阈值', '', true, true]],
              rows: [['阈值', '. . . .', '0.125', 0.0615], ['跟踪深度', '', '3', 0.187]] },
            { title: '截止阈值', labelWidth: 'w-[61px]', rows: [['漫射', '. . . .', '0.001', 0.001], ['反射', '. . . .', '0.001', 0.001], ['折射', '. . . .', '0.001', 0.001], ['阴影', '. . . .', '0.001', 0.001], ['直接照明', '', '0.01', 0.01]] },
            { title: '俄罗斯轮盘赌', labelWidth: 'w-[75px]', rows: [['重要性阈值', '', '0.001', 0.001], ['衰减', '. . . . . .', '0.5', 0.5]] },
        ];

        const checkRow = (g, [label, dots, checked, off], id) => `
            <div class="flex h-[25px] items-start pl-7 ${off ? 'text-[#888]' : ''}">
                <label for="${id}" class="flex ${g.labelWidth} gap-1.5 pt-[3px] whitespace-nowrap">${label}<span class="text-xs leading-5 text-[#888]">${dots}</span></label>
                <span class="relative mt-[5px] -ml-px size-[13px]">
                    <input id="${id}" type="checkbox" ${checked ? 'checked' : ''} ${off ? 'disabled' : ''} class="block size-[13px] appearance-none rounded-[4px] border border-[#333] bg-[#686868] checked:border-[#404040] checked:bg-[#404040]">
                    ${checked ? '<svg class="pointer-events-none absolute inset-0 size-[13px]" fill="none" stroke="#999" stroke-width="2"><path d="M2.500 6.500l3 4 5.500-8"/></svg>' : ''}
                </span>
            </div>`;

        const sliderRow = (g, [label, dots, value, pos], id) => `
            <div class="flex h-[27px] items-start pt-px pr-[10px] pl-7">
                <label for="${id}" class="flex ${g.labelWidth} shrink-0 gap-1.5 pt-[3px] whitespace-nowrap ${g.disabled ? 'text-[#888]' : ''}">${label}<span class="text-xs leading-5 text-[#888]">${dots}</span></label>
                <div class="relative shrink-0">
                    <input id="${id}" type="text" value="${value}" ${g.disabled ? 'disabled' : ''} class="block h-6 w-[82px] rounded-[3px] border pl-1 ${g.disabled ? 'border-[#3a3a3a] bg-[#404040] text-[#777]' : 'border-[#262626] bg-[#323232] text-[#b4b4b4]'}">
                    <svg class="pointer-events-none absolute top-2 right-0.5 h-[9px] w-[5px]" viewBox="0 0 5 9"><path d="M2.500 0L5 4H0zM2.500 9L5 5H0z" fill="${g.disabled ? '#707070' : '#a0a0a0'}"/></svg>
                </div>
                <div class="relative mt-1 ml-px h-[15px] flex-1 overflow-hidden rounded-r border-t ${g.disabled ? 'border-[#363636] bg-[#404040]' : 'border-[#222] bg-[#323232]'}">
                    <span class="absolute bottom-0 left-1/2 h-1 w-px ${g.disabled ? 'bg-[#2c2c2c]' : 'bg-[#8f6a1c]'}"></span>
                    <input type="range" aria-label="${label}" min="0" max="1" step="any" value="${pos}" ${g.disabled ? 'disabled' : ''}
                        class="absolute inset-0 h-full w-full appearance-none [&::-webkit-slider-thumb]:h-3.5 [&::-webkit-slider-thumb]:appearance-none ${g.disabled ? '[&::-webkit-slider-thumb]:w-px [&::-webkit-slider-thumb]:bg-[#333]' : '[&::-webkit-slider-thumb]:w-[3px] [&::-webkit-slider-thumb]:bg-[#f5a300]'}"
                        style="background:linear-gradient(to right,#808080 ${pos * 100}%,transparent ${pos * 100}%)">
                </div>
            </div>`;

        document.getElementById('groups').innerHTML = groups.map((g, i) => `
            <section class="bg-[#555] pb-[3px]">
                <h5 class="mb-0.5 flex h-[23px] items-center border-b border-[#4a4a4a] bg-[#696969] pt-px pl-[11px] text-[#d4d4d4]">
                    <svg class="mr-[2px] h-1 w-[7px]" viewBox="0 0 7 4"><path d="M0 0h7L3.500 4z" fill="#ddd"/></svg>${g.title}
                </h5>
                ${(g.checks || []).map((r, j) => checkRow(g, r, `check-${i}-${j}`)).join('')}
                ${g.rows.map((r, j) => sliderRow(g, r, `field-${i}-${j}`)).join('')}
            </section>`).join('');
    </script>
</body>
</html>
